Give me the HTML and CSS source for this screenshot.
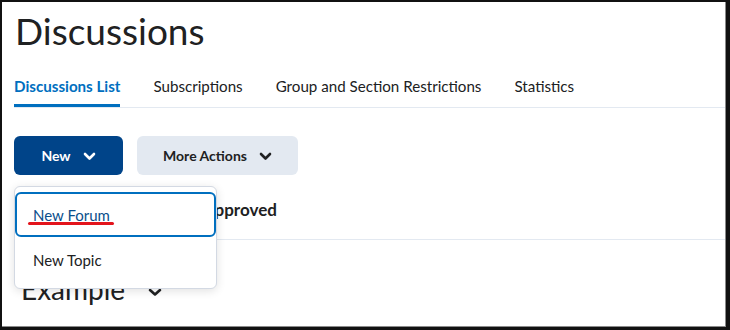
FILE: index.html
```html
<!DOCTYPE html>
<html lang="en">
<head>
<meta charset="utf-8">
<title>Discussions</title>
<link rel="stylesheet" href="styles.css">
</head>
<body>
<div class="frame">
  <h1 class="title">Discussions</h1>
  <nav class="tabs">
    <a class="tab active">Discussions List</a>
    <a class="tab">Subscriptions</a>
    <a class="tab">Group and Section Restrictions</a>
    <a class="tab">Statistics</a>
  </nav>
  <div class="actions">
    <button class="btn btn-primary">New
      <svg class="chev" viewBox="0 0 13 9" width="13" height="9"><path d="M2 2 L6.5 6.5 L11 2" fill="none" stroke="currentColor" stroke-width="2.6" stroke-linecap="round" stroke-linejoin="round"/></svg>
    </button>
    <button class="btn btn-secondary">More Actions
      <svg class="chev" viewBox="0 0 13 9" width="13" height="9"><path d="M2 2 L6.5 6.5 L11 2" fill="none" stroke="currentColor" stroke-width="2.6" stroke-linecap="round" stroke-linejoin="round"/></svg>
    </button>
    <div class="menu">
      <div class="menu-item focused"><span class="item-text">New Forum</span><span class="annot"></span></div>
      <div class="menu-item"><span class="item-text">New Topic</span></div>
    </div>
  </div>
  <div class="filter-row"><span class="filter">Unapproved</span></div>
  <div class="section">
    <h2 class="section-title">Example</h2>
    <svg class="chev-lg" viewBox="0 0 14 9" width="14" height="9"><path d="M2 2 L7 6.5 L12 2" fill="none" stroke="currentColor" stroke-width="2.6" stroke-linecap="round" stroke-linejoin="round"/></svg>
  </div>
</div>
</body>
</html>
```
FILE: styles.css
```css
* { box-sizing: border-box; }
html, body { margin: 0; padding: 0; background: #fff; }
body { font-family: Lato, "Noto Sans", sans-serif; color: #202122; }

.frame {
  width: 730px;
  height: 330px;
  overflow: hidden;
  border-style: solid;
  border-color: #111;
  border-width: 2px 4px 3px 2px;
  box-shadow: inset -1px -1px 0 #8a8a8a;
  padding: 7px 0 0 12px;
}

.title {
  margin: 0;
  font-size: 37px;
  font-weight: 400;
  line-height: 44px;
  padding-left: 1px;
}

.tabs {
  display: flex;
  gap: 33px;
  margin-top: 23px;
  border-bottom: 1px solid #e3e9f1;
  margin-right: 1px;
}
.tab {
  font-size: 15.15px;
  line-height: 20px;
  padding-bottom: 8px;
  border-bottom: 3px solid transparent;
  color: #202122;
}
.tab.active {
  color: #006fbf;
  font-weight: 700;
  border-bottom-color: #006fbf;
}

.actions {
  position: relative;
  display: flex;
  gap: 14px;
  margin-top: 28px;
}
.btn {
  display: flex;
  align-items: center;
  justify-content: center;
  gap: 12px;
  height: 39px;
  padding: 0;
  border: 0;
  border-radius: 6px;
  font-family: Lato, "Noto Sans", sans-serif;
  font-size: 14px;
  font-weight: 700;
}
.btn-primary { background: #004489; color: #fff; width: 109px; }
.btn-secondary { background: #e3e9f1; color: #202122; width: 161px; }
.chev { display: block; margin-top: 1px; }

.menu {
  position: absolute;
  top: 50px;
  left: 0;
  width: 203px;
  background: #fff;
  border: 1px solid #d3d9e3;
  border-radius: 6px;
  box-shadow: 0 2px 10px rgba(0, 0, 0, 0.12);
  padding: 5px 0 6px;
  z-index: 5;
}
.menu-item {
  position: relative;
  height: 45px;
  display: flex;
  align-items: center;
  padding-left: 18px;
  font-size: 15px;
  color: #202122;
}
.menu-item.focused {
  border: 2px solid #006fbf;
  border-radius: 6px;
  padding-left: 16px;
  color: #0a4f8c;
}
.menu-item.focused .item-text {
  text-decoration: underline;
  text-underline-offset: 2px;
  text-decoration-thickness: 1px;
}
.annot {
  position: absolute;
  left: 11px;
  top: 28px;
  width: 86px;
  height: 3px;
  border-radius: 2px;
  background: #e3141c;
}

.filter-row {
  margin-top: 23px;
  padding: 0 0 17px 170px;
  border-bottom: 1px solid #e3e9f1;
  margin-right: 1px;
}
.filter {
  font-size: 17px;
  font-weight: 700;
  line-height: 24px;
}

.section {
  display: flex;
  align-items: center;
  gap: 23px;
  margin-top: 32px;
  padding-left: 7px;
}
.section-title {
  margin: 0;
  font-size: 28px;
  font-weight: 400;
  line-height: 34px;
}
.chev-lg { display: block; margin-top: 6px; color: #202122; }
```
